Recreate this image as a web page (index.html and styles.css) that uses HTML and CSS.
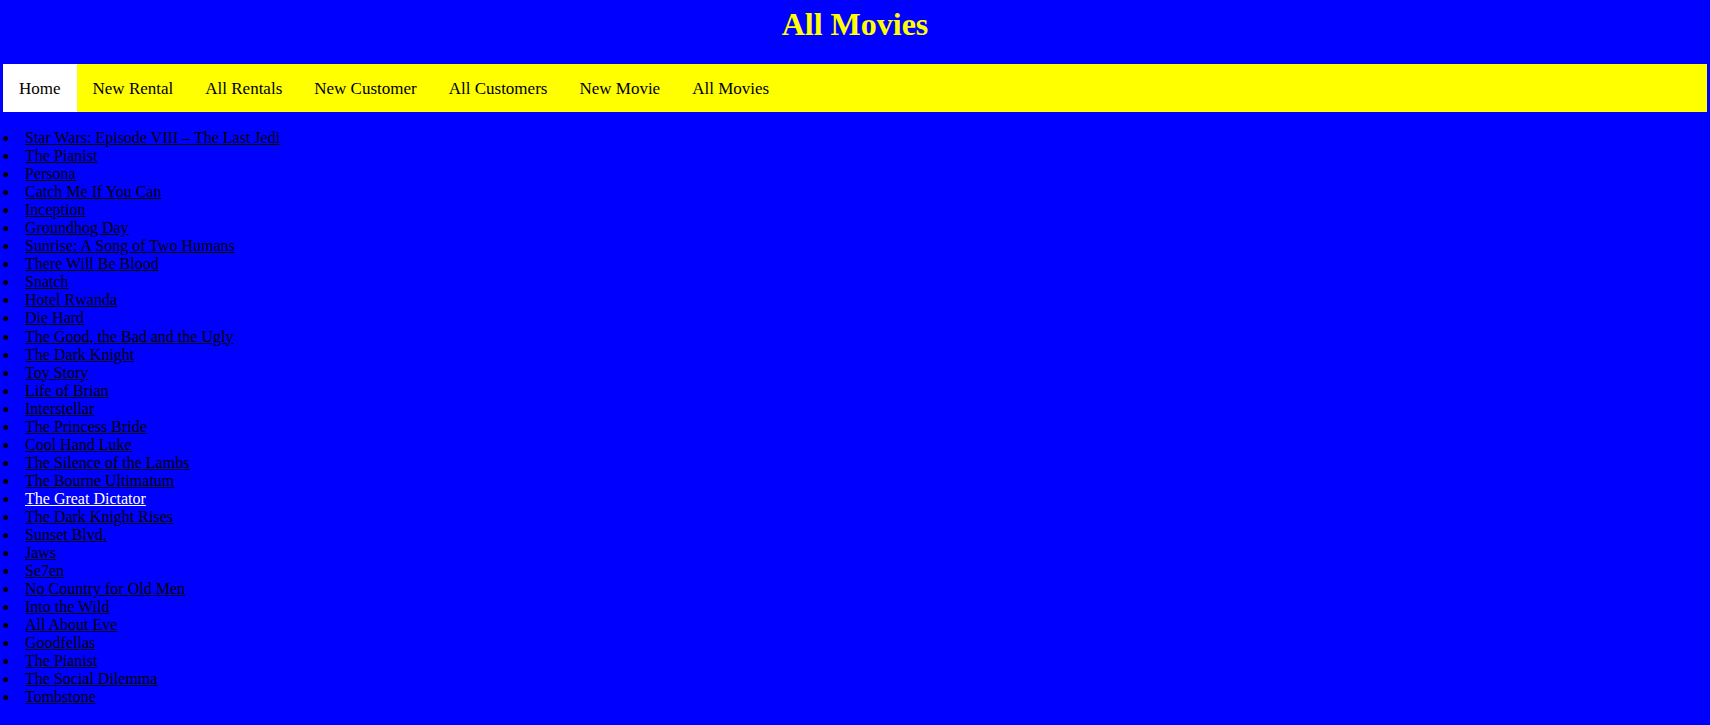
FILE: index.html
```html
<!DOCTYPE html>
<html lang="en">
<head>
<meta charset="utf-8">
<title>All Movies</title>
<link rel="stylesheet" href="styles.css">
</head>
<body>
<h1 class="title">All Movies</h1>
<nav class="navbar">
  <a class="nav-link active" href="#">Home</a>
  <a class="nav-link" href="#">New Rental</a>
  <a class="nav-link" href="#">All Rentals</a>
  <a class="nav-link" href="#">New Customer</a>
  <a class="nav-link" href="#">All Customers</a>
  <a class="nav-link" href="#">New Movie</a>
  <a class="nav-link" href="#">All Movies</a>
</nav>
<ul class="movie-list">
  <li><a href="#">Star Wars: Episode VIII – The Last Jedi</a></li>
  <li><a href="#">The Pianist</a></li>
  <li><a href="#">Persona</a></li>
  <li><a href="#">Catch Me If You Can</a></li>
  <li><a href="#">Inception</a></li>
  <li><a href="#">Groundhog Day</a></li>
  <li><a href="#">Sunrise: A Song of Two Humans</a></li>
  <li><a href="#">There Will Be Blood</a></li>
  <li><a href="#">Snatch</a></li>
  <li><a href="#">Hotel Rwanda</a></li>
  <li><a href="#">Die Hard</a></li>
  <li><a href="#">The Good, the Bad and the Ugly</a></li>
  <li><a href="#">The Dark Knight</a></li>
  <li><a href="#">Toy Story</a></li>
  <li><a href="#">Life of Brian</a></li>
  <li><a href="#">Interstellar</a></li>
  <li><a href="#">The Princess Bride</a></li>
  <li><a href="#">Cool Hand Luke</a></li>
  <li><a href="#">The Silence of the Lambs</a></li>
  <li><a href="#">The Bourne Ultimatum</a></li>
  <li><a class="hovered" href="#">The Great Dictator</a></li>
  <li><a href="#">The Dark Knight Rises</a></li>
  <li><a href="#">Sunset Blvd.</a></li>
  <li><a href="#">Jaws</a></li>
  <li><a href="#">Se7en</a></li>
  <li><a href="#">No Country for Old Men</a></li>
  <li><a href="#">Into the Wild</a></li>
  <li><a href="#">All About Eve</a></li>
  <li><a href="#">Goodfellas</a></li>
  <li><a href="#">The Pianist</a></li>
  <li><a href="#">The Social Dilemma</a></li>
  <li><a href="#">Tombstone</a></li>
</ul>
</body>
</html>
```
FILE: styles.css
```css
html, body {
  background: #0000ff;
}
body {
  margin: 0;
  font-family: "Liberation Serif", "Times New Roman", serif;
  font-size: 16px;
  color: #000;
}
.title {
  margin: 6px 0 21px;
  text-align: center;
  color: #ffff00;
  font-size: 32px;
  font-weight: bold;
}
.navbar {
  display: flex;
  margin: 0 3px;
  background: #ffff00;
}
.nav-link {
  display: block;
  padding: 15px 16px 13px;
  font-size: 17px;
  color: #000;
  text-decoration: none;
}
.nav-link.active {
  background: #ffffff;
}
.movie-list {
  margin: 17px 0 16px;
  padding-left: 25px;
  line-height: 18.05px;
  list-style: none;
}
.movie-list li {
  position: relative;
}
.movie-list li::before {
  content: "";
  position: absolute;
  left: -22px;
  top: 7px;
  width: 5px;
  height: 5px;
  border-radius: 50%;
  background: #000;
}
.movie-list a {
  color: #000;
  text-decoration: underline;
}
.movie-list a.hovered {
  color: #ffffff;
}
```
